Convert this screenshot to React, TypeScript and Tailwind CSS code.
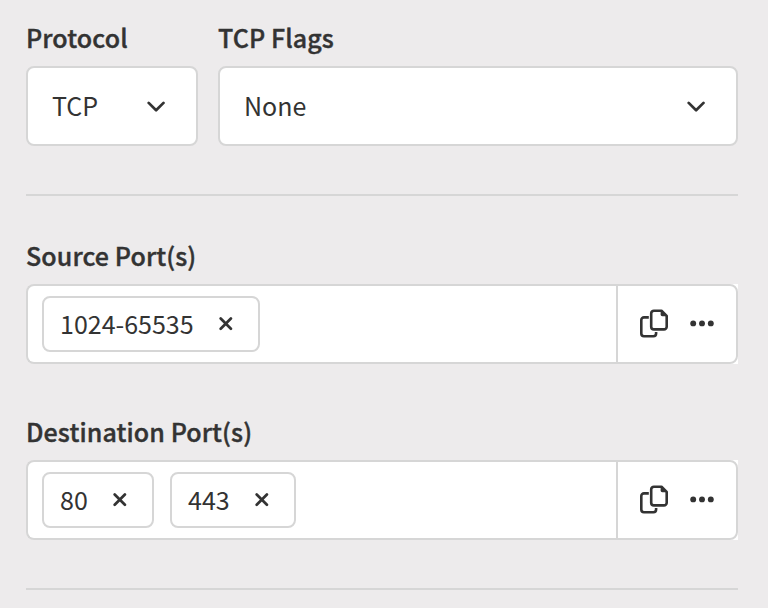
import React from "react";

function Chevron() {
  return (
    <svg className="mt-px" width="20" height="12" viewBox="0 0 20 12" fill="none" stroke="#333333" strokeWidth="2.7" strokeLinecap="round" strokeLinejoin="round">
      <path d="M2.7 1.9 10.1 9.3l7.4-7.4" />
    </svg>
  );
}

function CloseIcon() {
  return (
    <svg className="-mt-px" width="14" height="14" viewBox="0 0 14 14" fill="none" stroke="#333333" strokeWidth="2.7" strokeLinecap="round">
      <path d="M1.7 1.5l10.2 10.2M11.9 1.5 1.7 11.7" />
    </svg>
  );
}

function CopyIcon() {
  return (
    <svg width="28" height="29" viewBox="0 0 28 29" fill="none" stroke="#333333" strokeWidth="2.6" strokeLinejoin="round">
      <path d="M8.8 8.4H4a2.7 2.7 0 0 0-2.7 2.7v13.4A2.7 2.7 0 0 0 4 27.2h9.4a2.7 2.7 0 0 0 2.7-2.7v-1.4" />
      <path d="M13.9 1.7h7.6l5.2 5.2v10.8a2.7 2.7 0 0 1-2.7 2.7H13.9a2.7 2.7 0 0 1-2.7-2.7V4.4a2.7 2.7 0 0 1 2.7-2.7z" />
      <path d="M20.6 1v4.6a1.7 1.7 0 0 0 1.7 1.7H27z" fill="#333333" stroke="none" />
    </svg>
  );
}

function DotsIcon() {
  return (
    <svg width="24" height="7" viewBox="0 0 24 7" fill="#333333">
      <circle cx="3.2" cy="3.4" r="2.95" />
      <circle cx="12" cy="3.4" r="2.95" />
      <circle cx="20.8" cy="3.4" r="2.95" />
    </svg>
  );
}

function Label({ children }: { children: React.ReactNode }) {
  return <div className="h-8 text-[25px] leading-8 font-medium tracking-[0.1px] whitespace-nowrap [-webkit-text-stroke:0.4px_#333333]">{children}</div>;
}

function Select({ label, value, className }: { label: string; value: string; className: string }) {
  return (
    <div className={className}>
      <Label>{label}</Label>
      <div className="mt-[13px] flex h-20 items-center justify-between rounded-lg border-2 border-[#d6d6d6] bg-white pr-[30px] pl-6">
        <span className="pb-0.5 text-[25px] leading-8">{value}</span>
        <Chevron />
      </div>
    </div>
  );
}

function Chip({ value, className }: { value: string; className: string }) {
  return (
    <div className={`flex h-14 items-center justify-between rounded-lg border-2 border-[#d6d6d6] bg-white pr-[25px] pl-4 ${className}`}>
      <span className="-mt-0.5 text-[25px] leading-8">{value}</span>
      <CloseIcon />
    </div>
  );
}

function PortField({ label, children }: { label: string; children: React.ReactNode }) {
  return (
    <div>
      <Label>{label}</Label>
      <div className="mt-[13px] flex h-20">
        <div className="flex flex-1 items-center gap-4 rounded-l-lg border-2 border-r-0 border-[#d6d6d6] bg-white pl-[14px]">
          {children}
        </div>
        <div className="w-[122px] bg-white">
          <div className="flex h-20 items-center gap-[22px] rounded-r-lg border-2 border-[#d6d6d6] pb-px pl-[22px]">
            <CopyIcon />
            <DotsIcon />
          </div>
        </div>
      </div>
    </div>
  );
}

export default function App() {
  return (
    <main className="h-[608px] w-[768px] overflow-hidden bg-[#edebec] pt-[21px] pr-[30px] pl-[26px] font-['Noto_Sans_CJK_SC','Noto_Sans',sans-serif] text-[#333333]">
      <div className="flex gap-5">
        <Select label="Protocol" value="TCP" className="w-[172px]" />
        <Select label="TCP Flags" value="None" className="flex-1" />
      </div>
      <hr className="mt-12 mb-[43px] border-t-2 border-[#d6d6d6]" />
      <div className="flex flex-col gap-[51px]">
        <PortField label="Source Port(s)">
          <Chip value="1024-65535" className="w-[218px]" />
        </PortField>
        <PortField label="Destination Port(s)">
          <Chip value="80" className="w-28" />
          <Chip value="443" className="w-[126px]" />
        </PortField>
      </div>
      <hr className="mt-12 border-t-2 border-[#d6d6d6]" />
    </main>
  );
}
